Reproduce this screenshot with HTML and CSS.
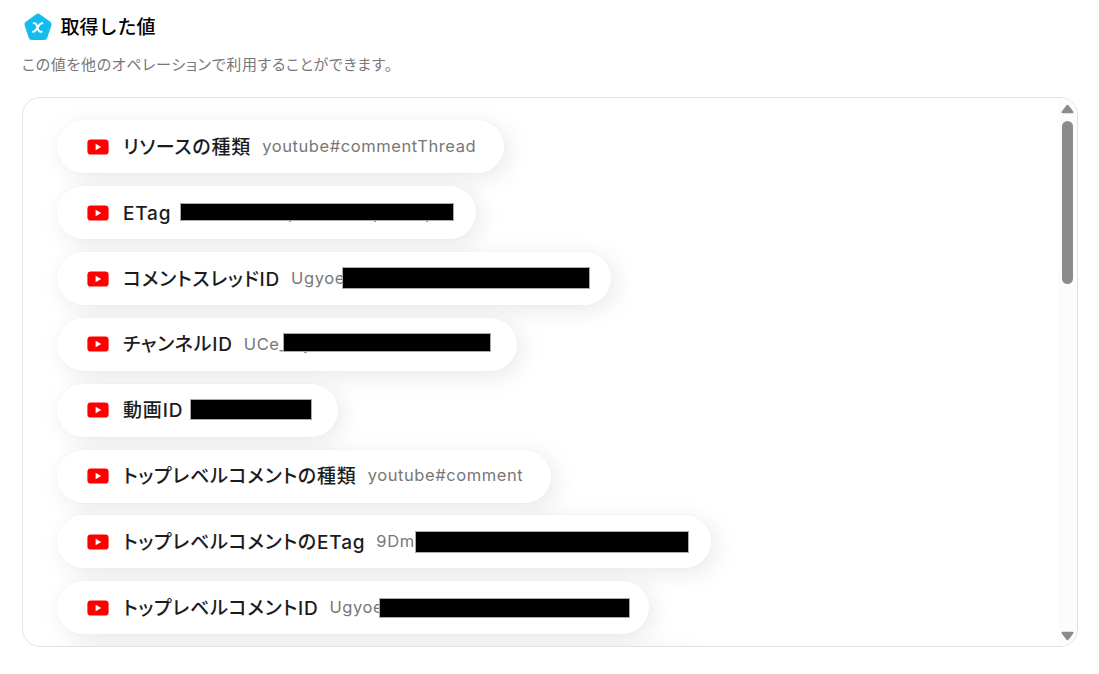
FILE: index.html
```html
<!DOCTYPE html>
<html lang="ja">
<head>
<meta charset="utf-8">
<title>取得した値</title>
<link rel="stylesheet" href="styles.css">
</head>
<body>
<svg class="defs" width="0" height="0" aria-hidden="true">
  <symbol id="youtube" viewBox="0 0 22 16"><rect x=".4" y=".4" width="21.2" height="15.2" rx="3.4" fill="#f00"/><path d="M8.6 4.8v6.4L14.2 8z" fill="#fff"/></symbol>
</svg>
<header class="heading">
  <svg class="heading-icon" viewBox="0 0 28 28"><path d="M12.2 1.2Q14 0 15.8 1.2L26.2 8.8Q28 10.2 27.4 12.2L23.3 24.8Q22.6 27 20.3 27H7.7Q5.4 27 4.7 24.8L.6 12.2Q0 10.2 1.8 8.8Z" fill="#13bcef"/><path d="M9.7 10.2h.8q1.3 0 1.9 1.5l1.9 5.3q.6 1.7 2 1.7h1.3M18.4 10.2q-1.6-.2-2.6 1.2l-4.3 6q-1 1.4-2.5 1.3" fill="none" stroke="#fff" stroke-width="2" stroke-linecap="round"/></svg>
  <h1 class="title">取得した値</h1>
</header>
<p class="description">この値を他のオペレーションで利用することができます。</p>
<main class="panel">
  <ul class="list">
    <li class="pill w1"><svg class="yt"><use href="#youtube"/></svg><span class="label">リソースの種類</span><span class="value">youtube#commentThread</span></li>
    <li class="pill w2"><svg class="yt"><use href="#youtube"/></svg><span class="label">ETag</span><span class="mask m2"></span></li>
    <li class="pill w3"><svg class="yt"><use href="#youtube"/></svg><span class="label">コメントスレッドID</span><span class="value">Ugyoe</span><span class="mask m3"></span></li>
    <li class="pill w4"><svg class="yt"><use href="#youtube"/></svg><span class="label">チャンネルID</span><span class="value">UCe_</span><span class="mask m4"></span></li>
    <li class="pill w5"><svg class="yt"><use href="#youtube"/></svg><span class="label">動画ID</span><span class="mask m5"></span></li>
    <li class="pill w6"><svg class="yt"><use href="#youtube"/></svg><span class="label">トップレベルコメントの種類</span><span class="value">youtube#comment</span></li>
    <li class="pill w7"><svg class="yt"><use href="#youtube"/></svg><span class="label">トップレベルコメントのETag</span><span class="value">9Dm</span><span class="mask m7"></span></li>
    <li class="pill w8"><svg class="yt"><use href="#youtube"/></svg><span class="label">トップレベルコメントID</span><span class="value">Ugyoe</span><span class="mask m8"></span></li>
    <li class="pill w9"></li>
  </ul>
  <div class="scrollbar">
    <svg class="arrow" viewBox="0 0 13 10"><path d="M6.5 1.7L11.5 8.2H1.5Z"/></svg>
    <div class="track"><div class="thumb"></div></div>
    <svg class="arrow" viewBox="0 0 13 10"><path d="M6.5 8.3L11.5 1.8H1.5Z"/></svg>
  </div>
</main>
</body>
</html>
```
FILE: styles.css
```css
* { box-sizing: border-box; }
body {
  margin: 0;
  height: 674px;
  padding: 12px 21px 0 22px;
  overflow: hidden;
  background: #fff;
  font-family: Inter, "Noto Sans CJK JP", sans-serif;
}
.defs { position: absolute; }
.heading { display: flex; align-items: center; height: 30px; padding-left: 2px; }
.heading-icon { width: 28px; height: 28px; margin-right: 8.5px; }
.title { margin: 0; padding-top: 2px; color: #000; font-size: 19px; font-weight: 500; line-height: 30px; }
.description {
  margin: 11px 0 20px;
  height: 24px;
  color: #777;
  font-size: 15px;
  line-height: 24px;
  white-space: nowrap;
  font-feature-settings: "palt";
  letter-spacing: .68px;
}
.panel {
  display: flex;
  height: 550px;
  overflow: hidden;
  border: 1px solid #e3e3e3;
  border-radius: 18px;
  background: #fff;
}
.list {
  display: flex;
  flex: 1;
  flex-direction: column;
  align-items: flex-start;
  gap: 12.83px;
  margin: 0;
  padding: 22.4px 0 0 34px;
  list-style: none;
  isolation: isolate;
}
.pill {
  position: relative;
  display: flex;
  flex: none;
  align-items: center;
  height: 53px;
  padding-left: 30px;
  border-radius: 27px;
  background: #fff;
  white-space: nowrap;
}
.pill::before {
  content: "";
  position: absolute;
  inset: 0;
  z-index: -1;
  border-radius: 27px;
  box-shadow: 5px 5px 25px rgba(0, 0, 0, .09), 0 0 1px rgba(0, 0, 0, .12);
}
.w1 { width: 447px; }
.w2 { width: 419px; }
.w3 { width: 554px; }
.w4 { width: 460px; }
.w5 { width: 281px; }
.w6 { width: 494px; }
.w7 { width: 654px; }
.w8 { width: 592px; }
.w9 { width: 640px; }
.yt { flex: none; width: 22px; height: 16px; margin-right: 14px; }
.label {
  color: #1c1c1c;
  font-size: 19px;
  font-weight: 500;
  line-height: 28px;
  padding-top: 2px;
  font-feature-settings: "palt";
  letter-spacing: .82px;
}
.value { margin-left: 11px; padding-bottom: 1.5px; color: #777; font-size: 16.5px; line-height: 26px; letter-spacing: .58px; }
.mask { position: absolute; background: #000; outline: 1px solid #aaa; outline-offset: -1px; }
.m2 { left: 123px; top: 17px; width: 274px; height: 18px; }
.m3 { left: 285px; top: 15px; width: 248px; height: 22px; }
.m4 { left: 226px; top: 15px; width: 208px; height: 19px; }
.m5 { left: 133px; top: 15px; width: 122px; height: 21px; }
.m7 { left: 358px; top: 16px; width: 274px; height: 22px; }
.m8 { left: 322px; top: 17px; width: 251px; height: 20px; }
.m2::after {
  content: "";
  position: absolute;
  left: 109px;
  top: 18px;
  width: 2px;
  height: 1px;
  background: #999;
  box-shadow: 85px 0 #999, 137px 0 #999;
}
.m4::after {
  content: "";
  position: absolute;
  left: 21px;
  top: 19px;
  width: 3px;
  height: 1px;
  background: #999;
}
.scrollbar {
  display: flex;
  flex: none;
  flex-direction: column;
  align-items: center;
  width: 19px;
  padding: 6px 0 5px;
  background: #fcfcfc;
}
.arrow { flex: none; width: 13px; height: 10px; fill: #8b8b8b; stroke: #8b8b8b; stroke-width: 2; stroke-linejoin: round; }
.track { flex: 1; padding-top: 7px; }
.thumb { width: 11px; height: 163px; border-radius: 6px; background: #8b8b8b; }
```
